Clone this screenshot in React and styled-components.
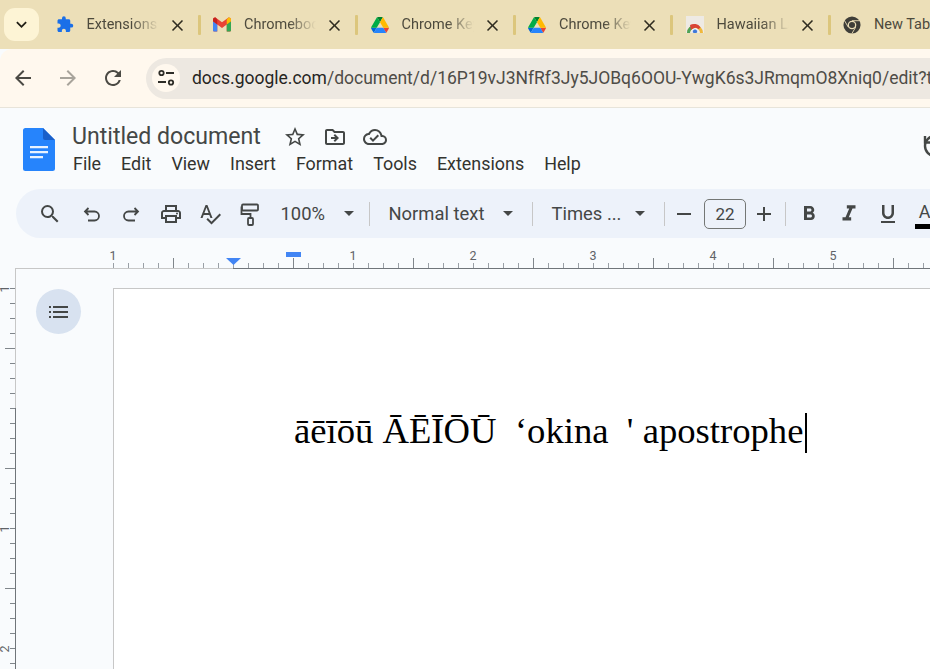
import React from 'react';
import styled, { createGlobalStyle } from 'styled-components';
import {
  MdExtension, MdClose, MdExpandMore, MdArrowBack, MdArrowForward, MdRefresh,
  MdStarBorder, MdOutlineDriveFileMove, MdOutlineCloudDone, MdSearch,
  MdOutlinePrint, MdOutlineSpellcheck, MdArrowDropDown, MdRemove, MdAdd,
  MdFormatBold, MdFormatItalic, MdFormatUnderlined,
} from 'react-icons/md';

const Global = createGlobalStyle`
  html, body { margin: 0; padding: 0; background: #f9fbfd; overflow: hidden; }
  #root { width: 930px; height: 669px; overflow: hidden; }
  * { box-sizing: border-box; }
`;

const Page = styled.div`
  width: 930px; height: 669px; overflow: hidden; display: flex; flex-direction: column;
  font-family: Roboto, "Liberation Sans", sans-serif; background: #f9fbfd;
`;
const TabStrip = styled.div`
  height: 49px; flex: none; background: #ecdfb8; display: flex; align-items: center; padding-left: 4px; overflow: hidden;
`;
const TabSearch = styled.div`
  width: 35px; height: 33px; flex: none; margin-right: 4px; margin-top: -1px; border-radius: 11px; background: #fdf4d5;
  display: flex; align-items: center; justify-content: center; color: #1f1d14; font-size: 21px;
`;
const Tab = styled.div`
  width: 157.5px; flex: none; height: 20px; position: relative; display: flex; align-items: center; padding-left: 12.5px;
  &::after {
    content: ''; display: ${p => (p.$last ? 'none' : 'block')}; position: absolute; right: 0; top: 0; width: 3px; height: 20px;
    background: #dcc67c; border-radius: 1px;
  }
`;
const TabIcon = styled.div`
  width: 18px; height: 18px; flex: none; margin-right: 13px; display: flex; align-items: center; justify-content: center;
  color: #1a6fe8; font-size: 21px;
`;
const TabTitle = styled.div`
  width: ${p => (p.$last ? '90px' : '72px')}; flex: none; overflow: hidden; white-space: nowrap; font-size: 14.5px; color: #4d4a3d;
  margin-top: -1px;
  ${p => (p.$last ? '' : `mask-image: linear-gradient(90deg, #000 62%, transparent 100%);`)}
`;
const TabClose = styled.div`
  width: 20px; height: 20px; flex: none; margin-left: 8.5px; display: flex; align-items: center; justify-content: center;
  color: #2f2c20; font-size: 19px; margin-top: 2px;
`;
const AddressBar = styled.div`
  height: 59px; flex: none; background: #fff8ee; border-radius: 12px 0 0 0; border-bottom: 1px solid #e8e4da;
  display: flex; align-items: center; padding-left: 8px;
`;
const NavButton = styled.div`
  width: 30px; height: 30px; flex: none; margin-right: 15px; display: flex; align-items: center; justify-content: center;
  color: ${p => (p.$off ? '#a8a49b' : '#4b4a44')}; font-size: 24px;
`;
const Omnibox = styled.div`
  flex: 1; height: 41px; margin-left: 3px; background: #ede8e1; border-radius: 21px 0 0 21px; display: flex; align-items: center;
  padding-left: 6px; overflow: hidden; white-space: nowrap;
`;
const SiteButton = styled.div`
  width: 28px; height: 28px; flex: none; border-radius: 50%; background: #fff8ee; margin-right: 12px; display: flex;
  align-items: center; justify-content: center;
`;
const Url = styled.div`
  font-size: 17.5px; color: #4e4c47;
  b { font-weight: 400; color: #26251f; }
`;
const DocHeader = styled.div`
  height: 81px; flex: none; display: flex; padding: 20px 0 0 23px; background: #f9fbfd;
`;
const TitleCol = styled.div`
  margin-left: 17px; margin-top: -7px; display: flex; flex-direction: column;
`;
const TitleRow = styled.div`
  display: flex; align-items: center; height: 29px;
`;
const Title = styled.div`
  font-size: 23.1px; color: #444746; margin-right: 22px; margin-top: 1px; white-space: nowrap;
`;
const TitleIcon = styled.div`
  width: 24px; height: 24px; margin-right: 16px; flex: none; display: flex; align-items: center; justify-content: center;
  color: #444746; font-size: 24px; margin-top: 2px;
`;
const MenuRow = styled.div`
  display: flex; gap: 20px; margin-top: 2px; margin-left: 1px; font-size: 17.9px; color: #33332f; line-height: 24px;
`;
const HistoryIcon = styled.div`
  position: absolute; left: 922px; top: 133px; display: flex;
`;
const ToolbarWrap = styled.div`
  height: 49px; flex: none; margin-left: 16px; background: #edf2fa; border-radius: 25px 0 0 25px; display: flex; align-items: center;
  padding-left: 14px; white-space: nowrap; overflow: hidden;
`;
const ToolIcon = styled.div`
  width: 39.5px; height: 30px; flex: none; display: flex; align-items: center; justify-content: center; color: #444746;
  font-size: ${p => p.$size || 24}px; margin-right: ${p => p.$mr || 0}px; margin-left: ${p => p.$ml || 0}px;
`;
const Select = styled.div`
  width: ${p => p.$w}px; flex: none; display: flex; align-items: center; justify-content: space-between; color: #444746;
  font-size: 18.4px; margin-left: ${p => p.$ml || 0}px; margin-top: -1px; svg { font-size: 24px; }
`;
const Sep = styled.div`
  width: 1px; height: 24px; flex: none; background: #c7c7c7; margin: 0 ${p => p.$r}px 0 ${p => p.$l}px;
`;
const SizeBox = styled.div`
  width: 42px; height: 30px; flex: none; border: 1px solid #747775; border-radius: 5px; display: flex; align-items: center;
  justify-content: center; font-size: 17px; color: #444746;
`;
const ColorA = styled.div`
  position: relative; width: 24px; height: 30px; flex: none; margin-left: 4.5px; text-align: center; color: #444746; font-size: 18px;
  line-height: 26px;
  &::after { content: ''; position: absolute; left: 2px; bottom: 0; width: 22px; height: 5px; background: #000; }
`;
const RulerH = styled.svg`
  display: block; flex: none; margin-top: 2px;
`;
const Body = styled.div`
  flex: 1; min-height: 0; display: flex; overflow: hidden;
`;
const RulerV = styled.svg`
  display: block; flex: none; width: 16px; height: 400px;
`;
const Rail = styled.div`
  width: 97px; flex: none; background: #f9fbfd; padding: 20px 0 0 20px;
`;
const OutlineButton = styled.div`
  width: 45px; height: 45px; border-radius: 50%; background: #d8e2f0; display: flex; align-items: center; justify-content: center;
`;
const Canvas = styled.div`
  flex: 1; padding-top: 19px; min-width: 0;
`;
const DocPage = styled.div`
  height: 500px; background: #fff; border: solid #c7c7c7; border-width: 1px 0 0 1px; padding: 118px 0 0 180px; width: 900px;
  font-family: "Liberation Serif", "Times New Roman", serif; font-size: 36.67px; line-height: 48px; color: #000; white-space: pre;
`;
const Cursor = styled.span`
  display: inline-block; width: 2px; height: 40px; background: #000; vertical-align: -10px; margin-left: 2px;
`;

const DriveIcon = () => (
  <svg width="18" height="16" viewBox="0 0 87.3 78">
    <path d="m6.6 66.85 3.85 6.65c.8 1.4 1.95 2.5 3.3 3.3l13.75-23.8h-27.5c0 1.55.4 3.1 1.2 4.5z" fill="#0066da" />
    <path d="m43.65 25-13.75-23.8c-1.35.8-2.5 1.9-3.3 3.3l-25.4 44a9.06 9.06 0 0 0-1.2 4.5h27.5z" fill="#00ac47" />
    <path d="m73.55 76.8c1.35-.8 2.5-1.9 3.3-3.3l1.6-2.75 7.65-13.25c.8-1.4 1.2-2.95 1.2-4.5h-27.502l5.852 11.5z" fill="#ea4335" />
    <path d="m43.65 25 13.75-23.8c-1.35-.8-2.9-1.2-4.5-1.2h-18.5c-1.6 0-3.15.45-4.5 1.2z" fill="#00832d" />
    <path d="m59.8 53h-32.3l-13.75 23.8c1.35.8 2.9 1.2 4.5 1.2h50.8c1.6 0 3.15-.45 4.5-1.2z" fill="#2684fc" />
    <path d="m73.4 26.5-12.7-22c-.8-1.4-1.95-2.5-3.3-3.3l-13.75 23.8 16.15 28h27.45c0-1.55-.4-3.1-1.2-4.5z" fill="#ffba00" />
  </svg>
);
const GmailIcon = () => (
  <svg width="19" height="15" viewBox="0 0 19 15">
    <path d="M0 2.2C0 .5 2 -.5 3.3.6L9.5 5.2 15.7.6C17 -.5 19 .5 19 2.2V13.5c0 .8-.7 1.5-1.5 1.5H14.5V7.5L9.5 11.2 4.5 7.5V15H1.5C.7 15 0 14.3 0 13.5Z" fill="#ea4335" />
    <path d="M0 4V13.5C0 14.3.7 15 1.5 15H4.5V7.5L0 4Z" fill="#4285f4" />
    <path d="M19 4V13.5c0 .8-.7 1.5-1.5 1.5H14.5V7.5L19 4Z" fill="#34a853" />
    <path d="M14.5 2.5V7.5L19 4V2.2C19 .5 17 -.5 15.7.6Z" fill="#fbbc04" />
    <path d="M0 2.2V4L4.5 7.5V2.5L3.3.6C2-.5 0 .5 0 2.2Z" fill="#c5221f" />
  </svg>
);
const RainbowIcon = () => (
  <svg width="18" height="17" viewBox="0 0 18 17">
    <rect width="18" height="17" fill="#eeeae4" />
    <path d="M1 17a8 8 0 0 1 16 0h-3a5 5 0 0 0-10 0Z" fill="#f0b83a" />
    <path d="M1 17a8 8 0 0 1 8-8v3a5 5 0 0 0-5 5Z" fill="#4ba35a" />
    <path d="M4 9a8 8 0 0 1 10.5 2.2l-2 2A5 5 0 0 0 5 14Z" fill="#d94435" />
    <circle cx="9" cy="15.5" r="2.6" fill="#3f78d8" stroke="#fff" strokeWidth=".8" />
  </svg>
);
const ChromeIcon = () => (
  <svg width="20" height="20" viewBox="0 0 20 20">
    <circle cx="10" cy="10" r="9.5" fill="#3f3e38" />
    <circle cx="10" cy="10" r="4.8" fill="#ecdfb8" />
    <circle cx="10" cy="10" r="3.4" fill="#3f3e38" />
    <path d="M10 5.2H18.6M5.9 12.4 1.6 5M14.1 12.4 9.8 19.6" stroke="#ecdfb8" strokeWidth="1" />
  </svg>
);
const DocsIcon = () => (
  <svg width="32" height="43" viewBox="0 0 32 43">
    <path d="M2.5 0H20L32 12V40.5A2.5 2.5 0 0 1 29.5 43H2.5A2.5 2.5 0 0 1 0 40.5V2.5A2.5 2.5 0 0 1 2.5 0Z" fill="#2684fc" />
    <path d="M20 0 32 12H22A2 2 0 0 1 20 10Z" fill="#1a5fc9" />
    <path d="M7 18H25V20.2H7ZM7 23H25V25.2H7ZM7 28H20V30.2H7Z" fill="#fff" fillOpacity=".9" />
  </svg>
);
const SiteIcon = () => (
  <svg width="20" height="20" viewBox="0 0 20 20" fill="none" stroke="#2e2d28" strokeWidth="1.8">
    <circle cx="5.5" cy="5" r="2.2" />
    <path d="M10 5H18M2 14H10" />
    <circle cx="15" cy="14.5" r="2.2" />
  </svg>
);
const UndoIcon = ({ flip }) => (
  <svg width="24" height="24" viewBox="0 0 24 24" fill="none" stroke="#444746" strokeWidth="1.8"
    transform={flip ? 'scale(-1 1)' : undefined}>
    <path d="M8.5 6 5 9.5 8.5 13M5 9.5H14.5a4.5 4.5 0 0 1 0 9H8" />
  </svg>
);
const PaintIcon = () => (
  <svg width="24" height="24" viewBox="0 0 24 24" fill="none" stroke="#444746" strokeWidth="1.8">
    <rect x="4" y="2.5" width="16" height="6" rx="1" />
    <path d="M4 5.5H3.5V12H12.5V16" />
    <rect x="10" y="16" width="5" height="7" rx="1" />
  </svg>
);
const OutlineIcon = () => (
  <svg width="20" height="14" viewBox="0 0 20 14" fill="#444746">
    <rect x="0" y="1" width="2" height="2" /><rect x="0" y="6" width="2" height="2" /><rect x="0" y="11" width="2" height="2" />
    <rect x="4" y="1" width="15" height="2" /><rect x="4" y="6" width="15" height="2" /><rect x="4" y="11" width="15" height="2" />
  </svg>
);
const HistoryGlyph = () => (
  <svg width="24" height="24" viewBox="0 0 24 24" fill="none" stroke="#444746" strokeWidth="2.4">
    <path d="M3 3V9.5H9.5" />
    <path d="M13 3A10 10 0 1 0 23 13" />
  </svg>
);

const HRuler = () => {
  const ticks = [];
  for (let i = 0; i * 15 + 113 < 930; i++) {
    const x = 113 + i * 15 + 0.5;
    const half = i % 8 === 4;
    ticks.push(<line key={i} x1={x} x2={x} y1={half ? 18 : 23} y2={28} stroke={half ? '#80868b' : '#9aa0a6'} />);
  }
  const labels = [[113, 1], [353, 1], [473, 2], [593, 3], [713, 4], [833, 5]];
  return (
    <RulerH width="930" height="29" viewBox="0 0 930 29">
      <line x1="15" x2="233" y1="28.5" y2="28.5" stroke="#c7c7c7" />
      <line x1="233" x2="930" y1="28.5" y2="28.5" stroke="#70757a" />
      {ticks}
      {labels.map(([x, n]) => (
        <text key={x} x={x} y="20" textAnchor="middle" fontSize="12.5" fontFamily="Roboto, sans-serif" fill="#5f6368">{n}</text>
      ))}
      <path d="M226 18H241L233.5 25Z" fill="#4285f4" />
      <rect x="286" y="12" width="15" height="5" fill="#4285f4" />
    </RulerH>
  );
};
const VRuler = () => {
  const ticks = [];
  for (let i = 0; i < 26; i++) {
    const y = 19.5 + i * 15;
    const half = i % 8 === 4;
    ticks.push(<line key={i} y1={y} y2={y} x1={half ? 5 : 10} x2="15" stroke="#80868b" />);
  }
  const labels = [[19, 1], [259, 1], [379, 2]];
  return (
    <RulerV viewBox="0 0 16 400">
      <line x1="15.5" x2="15.5" y1="0" y2="139" stroke="#c7c7c7" />
      <line x1="15.5" x2="15.5" y1="139" y2="400" stroke="#70757a" />
      {ticks}
      {labels.map(([y, n]) => (
        <text key={y} transform={`translate(9 ${y + 1}) rotate(-90)`} textAnchor="middle" fontSize="12.5" fontFamily="Roboto, sans-serif" fill="#5f6368">{n}</text>
      ))}
    </RulerV>
  );
};

const tabs = [
  { icon: <MdExtension />, title: 'Extensions' },
  { icon: <GmailIcon />, title: 'Chromebook' },
  { icon: <DriveIcon />, title: 'Chrome Keyboard' },
  { icon: <DriveIcon />, title: 'Chrome Keyboard' },
  { icon: <RainbowIcon />, title: 'Hawaiian Language' },
];

export default function App() {
  return (
    <Page>
      <Global />
      <TabStrip>
        <TabSearch><MdExpandMore /></TabSearch>
        {tabs.map((t, i) => (
          <Tab key={i}>
            <TabIcon>{t.icon}</TabIcon>
            <TabTitle>{t.title}</TabTitle>
            <TabClose><MdClose /></TabClose>
          </Tab>
        ))}
        <Tab $last>
          <TabIcon><ChromeIcon /></TabIcon>
          <TabTitle $last>New Tab</TabTitle>
        </Tab>
      </TabStrip>
      <AddressBar>
        <NavButton><MdArrowBack /></NavButton>
        <NavButton $off><MdArrowForward /></NavButton>
        <NavButton><MdRefresh /></NavButton>
        <Omnibox>
          <SiteButton><SiteIcon /></SiteButton>
          <Url><b>docs.google.com</b>/document/d/16P19vJ3NfRf3Jy5JOBq6OOU-YwgK6s3JRmqmO8Xniq0/edit?tab=t.0</Url>
        </Omnibox>
      </AddressBar>
      <DocHeader>
        <DocsIcon />
        <TitleCol>
          <TitleRow>
            <Title>Untitled document</Title>
            <TitleIcon><MdStarBorder /></TitleIcon>
            <TitleIcon><MdOutlineDriveFileMove /></TitleIcon>
            <TitleIcon><MdOutlineCloudDone /></TitleIcon>
          </TitleRow>
          <MenuRow>
            {['File', 'Edit', 'View', 'Insert', 'Format', 'Tools', 'Extensions', 'Help'].map(m => <span key={m}>{m}</span>)}
          </MenuRow>
        </TitleCol>
        <HistoryIcon><HistoryGlyph /></HistoryIcon>
      </DocHeader>
      <ToolbarWrap>
        <ToolIcon $mr={2.5}><MdSearch /></ToolIcon>
        <ToolIcon><UndoIcon /></ToolIcon>
        <ToolIcon><UndoIcon flip /></ToolIcon>
        <ToolIcon><MdOutlinePrint /></ToolIcon>
        <ToolIcon><MdOutlineSpellcheck /></ToolIcon>
        <ToolIcon><PaintIcon /></ToolIcon>
        <Select $w={80} $ml={11}>100%<MdArrowDropDown /></Select>
        <Sep $l={8} $r={19} />
        <Select $w={131}>Normal text<MdArrowDropDown /></Select>
        <Sep $l={12} $r={19} />
        <Select $w={100}>Times ...<MdArrowDropDown /></Select>
        <Sep $l={12} $r={0} />
        <ToolIcon><MdRemove /></ToolIcon>
        <SizeBox>22</SizeBox>
        <ToolIcon $ml={-2}><MdAdd /></ToolIcon>
        <Sep $l={1} $r={4} />
        <ToolIcon><MdFormatBold /></ToolIcon>
        <ToolIcon $size={26}><MdFormatItalic /></ToolIcon>
        <ToolIcon><MdFormatUnderlined /></ToolIcon>
        <ColorA>A</ColorA>
      </ToolbarWrap>
      <HRuler />
      <Body>
        <VRuler />
        <Rail><OutlineButton><OutlineIcon /></OutlineButton></Rail>
        <Canvas>
          <DocPage>āēīōū ĀĒĪŌŪ  ‘okina  ' apostrophe<Cursor /></DocPage>
        </Canvas>
      </Body>
    </Page>
  );
}
